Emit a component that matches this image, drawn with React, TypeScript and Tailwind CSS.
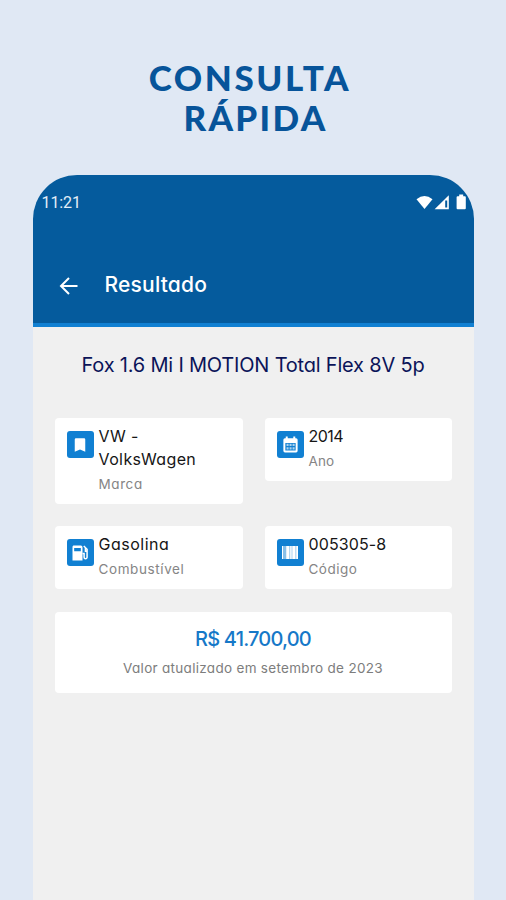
import type { ReactNode } from "react";

const BookmarkIcon = () => (
  <svg viewBox="0 0 24 24" className="w-[18px] h-[18px]" fill="white">
    <path d="M17.5 3h-11A1.5 1.5 0 0 0 5 4.5V21l7-3 7 3V4.5A1.5 1.5 0 0 0 17.5 3z" />
  </svg>
);

const CalendarIcon = () => (
  <svg viewBox="0 0 24 24" className="w-[19px] h-[19px]">
    <path
      fill="white"
      fillRule="evenodd"
      d="M6 2h2.5v2h7V2H18v2h1a2 2 0 0 1 2 2v14a2 2 0 0 1-2 2H5a2 2 0 0 1-2-2V6a2 2 0 0 1 2-2h1zM5.5 10v9.5h13V10z"
    />
    <path
      fill="white"
      fillOpacity=".65"
      d="M7 11.2h2.6v2.8H7zM10.8 11.2h2.6v2.8h-2.6zM14.6 11.2h2.6v2.8h-2.6zM7 15.4h2.6v2.8H7zM10.8 15.4h2.6v2.8h-2.6zM14.6 15.4h2.6v2.8h-2.6z"
    />
  </svg>
);

const FuelIcon = () => (
  <svg viewBox="0 0 24 24" className="w-[20px] h-[20px]">
    <path
      fill="white"
      fillRule="evenodd"
      d="M4 3h9a2 2 0 0 1 2 2v16H3V5a2 2 0 0 1 1-2zM5 6v4h8V6z"
    />
    <path
      fill="none"
      stroke="white"
      strokeWidth="1.8"
      d="M16.5 3.5l4 4V17a1.8 1.8 0 0 1-3.6 0v-4.5H15M20.5 10h-2V6"
    />
  </svg>
);

const BarcodeIcon = () => (
  <svg viewBox="0 0 16 13" className="w-[16px] h-[13px]" fill="white">
    <path d="M0 0h1.5v13H0zM2.5 0h1v13h-1zM4.3 0h3v13h-3zM8.2 0h1.4v13H8.2zM10.4 0h3v13h-3zM14.3 0H16v13h-1.7z" />
    <path fillOpacity=".55" d="M4 0h12v13H4z" />
  </svg>
);

const StatusIcons = () => (
  <svg width="52" height="18" viewBox="0 0 52 18" fill="white">
    <path d="M0.5 5.2Q8.5-1.2 16.5 5.2L8.5 15z" />
    <path d="M32.8 1.2V15.2H18.6z" />
    <path d="M29.2 6.5h2v7h-2z" fill="#055b9d" />
    <path d="M43.2.6h4v1.6h1.6a1 1 0 0 1 1 1v11a1 1 0 0 1-1 1h-7.2a1 1 0 0 1-1-1v-11a1 1 0 0 1 1-1h1.6z" />
  </svg>
);

type CardProps = {
  icon: ReactNode;
  value: ReactNode;
  label: string;
  valueClass: string;
  labelClass: string;
};

const InfoCard = ({ icon, value, label, valueClass, labelClass }: CardProps) => (
  <div className="flex items-start rounded-[4px] bg-white pl-3 pt-[7px] pb-[9px]">
    <div className="flex items-center justify-center w-[27px] h-[27px] mt-[6px] rounded-[3px] bg-[#1180d2] shrink-0">
      {icon}
    </div>
    <div className="ml-[5px] whitespace-nowrap">
      <div className={`text-[16px] leading-[23px] text-[#161616] ${valueClass}`}>
        {value}
      </div>
      <div
        className={`mt-[2px] text-[13.5px] leading-[22px] text-[#858585] ${labelClass}`}
      >
        {label}
      </div>
    </div>
  </div>
);

const App = () => {
  return (
    <div className="flex flex-col items-center w-full h-screen overflow-hidden bg-[#e0e8f4] font-['Inter',sans-serif] [font-feature-settings:'cv11']">
      <h1 className="flex flex-col items-center h-[175px] shrink-0 pt-[57px] font-['Lato',sans-serif] font-black text-[35px] leading-[40px] text-[#07549a]">
        <span className="pr-[6px] tracking-[2.6px]">CONSULTA</span>
        <span className="pl-[5px] tracking-[2.3px]">RÁPIDA</span>
      </h1>
      <div className="flex flex-col flex-1 w-[441px] overflow-hidden rounded-t-[44px] bg-[#f0f0f0]">
        <header className="h-[152px] shrink-0 border-b-4 border-[#1180d2] bg-[#055b9d] text-white">
          <div className="flex items-center justify-between pl-[9px] pr-[6px] pt-[18px]">
            <span className="font-['Roboto',sans-serif] text-[16px] leading-[20px] tracking-[-0.1px] text-[#e4eef8]">
              11:21
            </span>
            <StatusIcons />
          </div>
          <div className="flex items-center mt-[58px] pl-[26px]">
            <svg
              width="20"
              height="20"
              viewBox="0 0 20 20"
              className="mt-[2px]"
              fill="none"
              stroke="white"
              strokeWidth="2"
            >
              <path d="M18.5 10H2.5M10 2l-8 8 8 8" />
            </svg>
            <h2 className="ml-[26px] text-[21px] leading-[28px] font-medium tracking-[0.2px]">
              Resultado
            </h2>
          </div>
        </header>
        <main className="flex flex-col px-[22px]">
          <h3 className="mt-[24px] text-center whitespace-nowrap text-[20px] leading-[28px] tracking-[-0.2px] text-[#0b1459]">
            Fox 1.6 Mi I MOTION Total Flex 8V 5p
          </h3>
          <div className="grid grid-cols-[188px_187px] items-start justify-between gap-y-[22px] mt-[39px]">
            <InfoCard
              icon={<BookmarkIcon />}
              value={
                <>
                  VW -<br />
                  VolksWagen
                </>
              }
              label="Marca"
              valueClass="tracking-[0.4px]"
              labelClass="tracking-[0.6px]"
            />
            <InfoCard
              icon={<CalendarIcon />}
              value="2014"
              label="Ano"
              valueClass="tracking-[-0.5px]"
              labelClass="tracking-[0.1px]"
            />
            <InfoCard
              icon={<FuelIcon />}
              value="Gasolina"
              label="Combustível"
              valueClass="tracking-[0.5px]"
              labelClass="tracking-[0.6px]"
            />
            <InfoCard
              icon={<BarcodeIcon />}
              value="005305-8"
              label="Código"
              valueClass="tracking-[0.1px]"
              labelClass="tracking-[0.5px]"
            />
          </div>
          <section className="h-[81px] mt-[23px] rounded-[4px] bg-white pt-[13px] text-center whitespace-nowrap">
            <div className="text-[20px] leading-[28px] font-medium tracking-[-0.8px] text-[#1678c8]">
              R$ 41.700,00
            </div>
            <div className="mt-[5px] text-[13.5px] leading-[20px] tracking-[0.3px] text-[#7d7d7d]">
              Valor atualizado em setembro de 2023
            </div>
          </section>
        </main>
      </div>
    </div>
  );
};
export default App;
